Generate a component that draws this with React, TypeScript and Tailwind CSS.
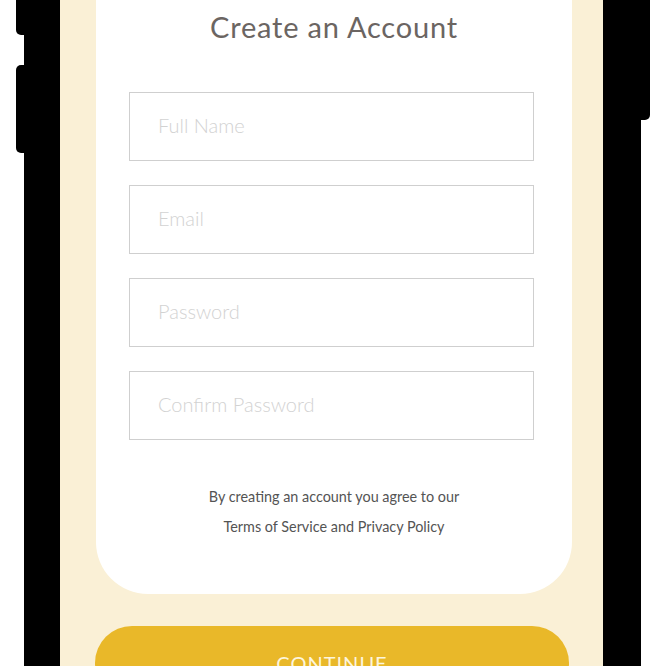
import React from 'react'

const fields = ['Full Name', 'Email', 'Password', 'Confirm Password']

export default function App() {
  return (
    <div className="w-[666px] h-[666px] overflow-hidden bg-white" style={{ fontFamily: 'Lato, "Open Sans", sans-serif' }}>
      <div className="relative ml-[24px] w-[617px] h-[666px] bg-black pl-[36px] pr-[38px]">
        {/* side buttons */}
        <div className="absolute left-[-8px] top-[-20px] w-[8px] h-[55px] bg-black rounded-l-[5px]" />
        <div className="absolute left-[-8px] top-[65px] w-[8px] h-[88px] bg-black rounded-l-[5px]" />
        <div className="absolute right-[-9px] top-[-20px] w-[9px] h-[140px] bg-black rounded-r-[5px]" />

        <div className="h-full bg-[#faf0d6] pl-[36px] pr-[31px] flex flex-col">
          <div className="bg-white rounded-b-[52px] pt-[13px] pb-[52px] flex flex-col">
            <h2 className="text-center text-[29px] leading-[28px] text-[#6b6562] tracking-[0.8px]">
              Create an Account
            </h2>

            <form className="mt-[51px] pl-[33px] flex flex-col gap-[24px]">
              {fields.map((f) => (
                <input
                  key={f}
                  type={f.includes('Password') ? 'password' : 'text'}
                  placeholder={f}
                  className="w-[405px] h-[69px] border-[1.5px] border-[#cfcfcf] bg-white px-[28px] pb-[3px] text-[20px] font-light text-[#555] placeholder:text-[#d2d2d2] outline-none"
                />
              ))}
            </form>

            <p className="mt-[42px] text-center text-[14.4px] leading-[30px] text-[#545454]">
              By creating an account you agree to our
              <br />
              Terms of Service and Privacy Policy
            </p>
          </div>

          <button className="mt-[32px] ml-[-1px] w-[474px] h-[74px] shrink-0 rounded-[40px] bg-[#e9b829] text-[#fdf5dd] text-[20px] tracking-[1px]">
            CONTINUE
          </button>
        </div>
      </div>
    </div>
  )
}
